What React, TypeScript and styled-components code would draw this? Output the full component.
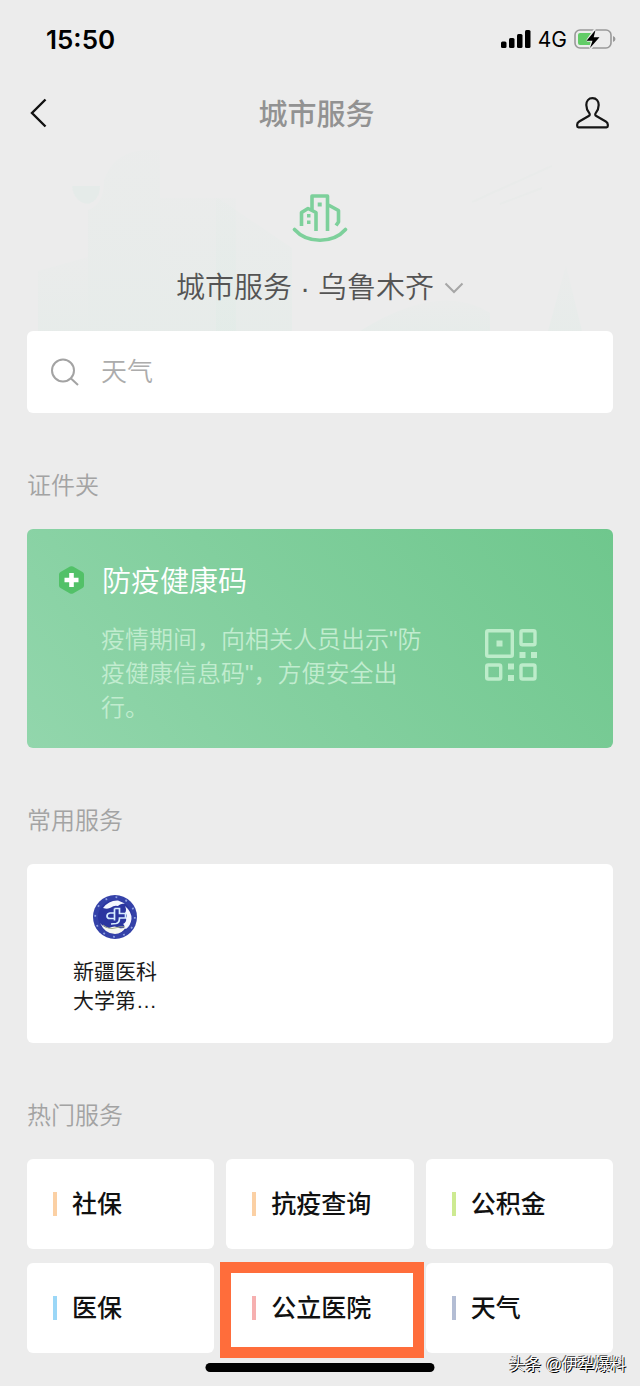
import React from "react";
import styled, { createGlobalStyle } from "styled-components";

const GlobalStyle = createGlobalStyle`
  *, *::before, *::after { box-sizing: border-box; }
  body {
    margin: 0;
    background: #ececec;
    color: #1a1a1a;
    font-family: "Liberation Sans", "Noto Sans CJK SC", sans-serif;
  }
  h1, h2, h3, p, ul { margin: 0; padding: 0; font-weight: inherit; }
  button, input { font: inherit; color: inherit; border: 0; background: none; padding: 0; }
  button { cursor: pointer; }
  svg { display: block; flex: none; }
`;

const Page = styled.div`
  position: relative;
  min-height: 100vh;
  padding-bottom: 33px;
  overflow: hidden;
`;

const StatusBar = styled.header`
  display: flex;
  align-items: center;
  justify-content: space-between;
  height: 78px;
  padding: 0 24px 0 46px;
  font-family: Inter, sans-serif;
  color: #000;
`;

const Clock = styled.time`
  font-size: 26px;
  font-weight: 600;
`;

const StatusIcons = styled.div`
  display: flex;
  align-items: center;
  gap: 7px;
  font-size: 21px;
`;

const NavBar = styled.nav`
  display: flex;
  align-items: center;
  justify-content: space-between;
  height: 70px;
  padding: 0 31px 0 30px;
`;

const IconButton = styled.button<{ $align: string; $width: number }>`
  display: flex;
  justify-content: ${(p) => p.$align};
  width: ${(p) => p.$width}px;
`;

const NavTitle = styled.h1`
  padding-top: 4px;
  font-size: 29px;
  line-height: 40px;
  font-weight: 500;
  color: #929292;
`;

const Hero = styled.section`
  position: relative;
  display: flex;
  flex-direction: column;
  align-items: center;
  height: 183px;
  padding-top: 45px;
`;

const Skyline = styled.svg`
  position: absolute;
  left: 0;
  top: 0;
  width: 100%;
  height: 100%;
`;

const CityButton = styled.button`
  position: relative;
  display: flex;
  align-items: center;
  gap: 10px;
  margin-top: 25px;
  font-size: 29px;
  line-height: 40px;
  font-weight: 350;
  color: #545454;
`;

const Main = styled.main`
  padding: 0 27px;
`;

const SearchBox = styled.label`
  position: relative;
  display: flex;
  align-items: center;
  gap: 22px;
  height: 82px;
  padding: 0 24px;
  border-radius: 6px;
  background: #fff;
`;

const SearchInput = styled.input`
  flex: 1;
  min-width: 0;
  font-size: 26px;
  line-height: 36px;
  font-weight: 350;
  outline: none;
  &::placeholder { color: #acacac; opacity: 1; }
`;

const SectionTitle = styled.h2`
  padding: 57px 0 27px;
  font-size: 24px;
  line-height: 32px;
  font-weight: 350;
  color: #a3a3a3;
`;

const HealthCard = styled.button`
  display: flex;
  align-items: flex-start;
  width: 100%;
  height: 219px;
  padding: 0 76px 0 32px;
  border-radius: 6px;
  background: linear-gradient(50deg, #92d6ac, #82cf9e 45%, #6fc78d);
  text-align: left;
`;

const HealthBody = styled.div`
  flex: 1;
  padding-top: 29px;
`;

const HealthHead = styled.div`
  display: flex;
  align-items: center;
  gap: 18px;
`;

const HealthTitle = styled.h3`
  padding-top: 4px;
  font-size: 29px;
  line-height: 40px;
  font-weight: 350;
  color: #fff;
`;

const HealthText = styled.p`
  width: 326px;
  margin: 21px 0 0 42px;
  font-size: 24px;
  line-height: 34px;
  font-weight: 350;
  color: #c1eccf;
`;

const QrSlot = styled.span`
  padding-top: 100px;
`;

const ServiceCard = styled.div`
  display: flex;
  height: 179px;
  padding: 30px 0 0 28px;
  border-radius: 6px;
  background: #fff;
`;

const ServiceLink = styled.a`
  display: flex;
  flex-direction: column;
  align-items: center;
  gap: 17px;
  width: 120px;
  font-size: 21px;
  line-height: 29px;
  color: #1a1a1a;
  text-align: center;
  text-decoration: none;
`;

const TileGrid = styled.div`
  display: grid;
  grid-template-columns: repeat(3, 1fr);
  gap: 14px 12px;
`;

const Tile = styled.button<{ $accent: string }>`
  position: relative;
  display: flex;
  align-items: center;
  gap: 15px;
  height: 90px;
  padding: 0 26px;
  border-radius: 6px;
  background: #fff;
  font-size: 25px;
  line-height: 36px;
  font-weight: 500;
  color: #111;
  white-space: nowrap;
  &::before {
    content: "";
    width: 4px;
    height: 24px;
    background: ${(p) => p.$accent};
  }
`;

const Highlight = styled.span`
  position: absolute;
  inset: -1px -10px -5px -6px;
  z-index: 1;
  border: 11px solid #ff6d3b;
`;

const HomeIndicator = styled.div`
  position: absolute;
  left: 50%;
  bottom: 14px;
  width: 229px;
  height: 9px;
  border-radius: 5px;
  background: #000;
  transform: translateX(-50%);
`;

const Watermark = styled.div`
  position: absolute;
  right: 14px;
  bottom: 9px;
  font-size: 16px;
  line-height: 24px;
  color: #fff;
  text-shadow: 1px 1px 0 #000, -1px -1px 0 #555;
`;

const tiles = [
  { name: "社保", accent: "#fbd0a4" },
  { name: "抗疫查询", accent: "#fbd0a4" },
  { name: "公积金", accent: "#cdea91" },
  { name: "医保", accent: "#9bd7f7" },
  { name: "公立医院", accent: "#f6b0b0", marked: true },
  { name: "天气", accent: "#b3bdd4" },
];

const SignalIcon = () => (
  <svg width="30" height="18" viewBox="0 0 30 18" fill="#000">
    <rect x="0" y="11.500" width="5.500" height="6.500" rx="1.500" />
    <rect x="8" y="8" width="5.500" height="10" rx="1.500" />
    <rect x="16" y="4" width="5.500" height="14" rx="1.500" />
    <rect x="24" y="0" width="5.500" height="18" rx="1.500" />
  </svg>
);

const BatteryIcon = () => (
  <svg width="42" height="22" viewBox="0 0 42 22">
    <rect x="1" y="2" width="36" height="18" rx="5" fill="none" stroke="#999" strokeWidth="1.600" />
    <path d="M39 8v6q2.500-.8 2.500-3T39 8z" fill="#999" />
    <path d="M6 5h14v12H6q-2 0-2-2V7q0-2 2-2z" fill="#62cc67" />
    <path d="M20.500 2.500 14 12.200h4.500L16.800 19.500l7.700-9.700h-5L20.500 2.500z" fill="#000" stroke="#ececec" strokeWidth="3" strokeLinejoin="round" />
    <path d="M21.500 2 12.500 12.700h6L16 20l9.500-10.700h-5.800L21.500 2z" fill="#000" />
  </svg>
);

const BackIcon = () => (
  <svg width="18" height="30" viewBox="0 0 18 30" fill="none" stroke="#111" strokeWidth="2.400">
    <path d="M15.500 1.500 2 15l13.500 13.500" />
  </svg>
);

const PersonIcon = () => (
  <svg width="33" height="32" viewBox="0 0 33 32" fill="none" stroke="#161616" strokeWidth="2.200" strokeLinejoin="round">
    <path d="M16.500 1.200c-4 0-6.200 2.900-6.200 6.800 0 3.500 1.300 6 3 8.100.8 1 .6 2.300-.6 2.900L3.200 24.500q-2 1.100-2 3.100v1.400q0 1.300 1.300 1.300h28q1.300 0 1.300-1.300v-1.400q0-2-2-3.100L20.300 19c-1.200-.6-1.400-1.900-.6-2.900 1.700-2.100 3-4.600 3-8.100 0-3.900-2.200-6.800-6.200-6.800z" />
  </svg>
);

const LogoSvg = styled.svg`
  position: relative;
`;

const CityLogo = () => (
  <LogoSvg width="56" height="50" viewBox="0 0 56 50" fill="none" stroke="#7dd09b" strokeWidth="3.600">
    <path d="M9.500 33V19.500l6.500-4 8 4V38M20 17V3h15.500v35M35.500 11.500 46.500 17.500V29l-2.500 3.500" strokeLinejoin="round" />
    <path d="M25.700 9.500h4v4h-4zM15 21h3.500v3.500H15zM15 27.500h3.500V31H15z" fill="#7dd09b" stroke="none" />
    <path d="M2.500 36.500q9.500 10.700 25.500 10.700t25.500-10.700" strokeLinecap="round" />
  </LogoSvg>
);

const ChevronIcon = () => (
  <svg width="20" height="12" viewBox="0 0 20 12" fill="none" stroke="#a6a6a6" strokeWidth="2">
    <path d="m1.500 1.500 8.500 8.500 8.500-8.500" />
  </svg>
);

const SearchIcon = () => (
  <svg width="28" height="28" viewBox="0 0 28 28" fill="none" stroke="#a3a3a3" strokeWidth="2">
    <circle cx="12" cy="12.500" r="11" />
    <path d="m20 20.500 7 6.500" />
  </svg>
);

const HealthIcon = () => (
  <svg width="25" height="28" viewBox="0 0 25 28">
    <path d="M11 .6q1.500-.9 3 0l9.500 5.400q1.500.9 1.500 2.600v10.800q0 1.700-1.500 2.600L14 27.400q-1.500.9-3 0L1.500 22Q0 21.100 0 19.400V8.600Q0 6.900 1.500 6z" fill="#52c168" />
    <path d="M12.500 7v14M5.500 14h14" stroke="#fff" strokeWidth="4.600" />
  </svg>
);

const QrIcon = () => (
  <svg width="52" height="52" viewBox="0 0 52 52" fill="none" stroke="#bdecca" strokeWidth="3.400">
    <rect x="1.700" y="1.700" width="25.600" height="25.600" rx="1.500" />
    <rect x="36" y="1.700" width="14" height="14" rx="1.500" />
    <rect x="1.700" y="36" width="14" height="14" rx="1.500" />
    <rect x="36" y="36" width="14" height="14" rx="1.500" />
    <path d="M11.500 11.500h6v6h-6zM34.500 23h6v6h-6zM46 23h6v6h-6zM23 34.500h6v6h-6zM23 46h6v6h-6z" fill="#bdecca" stroke="none" />
  </svg>
);

const HospitalLogo = () => (
  <svg width="46" height="46" viewBox="0 0 46 46">
    <circle cx="23" cy="23" r="22" fill="#3441a8" />
    <circle cx="23" cy="23" r="19.800" fill="none" stroke="#8fa0e0" strokeWidth="1.800" strokeDasharray="1.800 8.560" />
    <circle cx="23" cy="23" r="17" fill="#2b35a0" />
    <path d="M11 14q6-8 15-7.500l7 3q-5 0-7 2.500-4-1-7 1.500-3 2-8 .5z" fill="#f4f6ff" />
    <path d="M33 12q7 6 6.500 13-1 7-5.500 10l-2-1q1-3-1-4 4-2 3-6 2-3-1-5 2-3 0-7z" fill="#f4f6ff" />
    <path d="M8 29q4 5 9 5 6-3 10 0 4 1 7-1-4 7-11 7-10 0-15-11z" fill="#f7f8f2" />
    <path d="M11 31q6 5 12 3t10-1" fill="none" stroke="#a9b08e" strokeWidth="1" />
    <path d="M22.500 14.500h5v5h6v4.500h-6q0 5-3.500 5.500l-5 .5M22.500 14.500v12M22 19h-4q-3 .5-3 3t3 2.500h4" fill="none" stroke="#d6ecff" strokeWidth="1.700" />
  </svg>
);

export default function App() {
  return (
    <>
      <GlobalStyle />
      <Page>
        <StatusBar>
          <Clock>15:50</Clock>
          <StatusIcons>
            <SignalIcon />
            <span>4G</span>
            <BatteryIcon />
          </StatusIcons>
        </StatusBar>
        <NavBar>
          <IconButton $align="flex-start" $width={34} aria-label="返回"><BackIcon /></IconButton>
          <NavTitle>城市服务</NavTitle>
          <IconButton $align="flex-end" $width={40} aria-label="我的"><PersonIcon /></IconButton>
        </NavBar>
        <Hero>
          <Skyline viewBox="0 0 640 183" preserveAspectRatio="none" aria-hidden="true">
            <defs>
              <linearGradient id="haze" x1="0" y1="0" x2="0" y2="1">
                <stop offset="0" stopColor="#dcebe5" stopOpacity="0.1" />
                <stop offset="1" stopColor="#dcebe5" stopOpacity="0.32" />
              </linearGradient>
            </defs>
            <g fill="url(#haze)">
              <path d="M88 183V62q16-5 16-30 10-28 40-30h16v181z" />
              <path d="M160 183V50h58l74 50v83z" />
              <path d="M38 183v-60l50-14v74z" />
              <path d="M216 183V50h20v133z" />
              <path d="M360 183q80-50 130-18v18z" />
              <path d="M548 183l18-66 16 66z" />
            </g>
            <path d="M72 38h28q0 14-12 18-14-2-16-18z" fill="#dcebe5" opacity="0.4" />
            <path d="M472 54l80-36M500 56l42-16" stroke="#e9ebea" strokeWidth="2" />
          </Skyline>
          <CityLogo />
          <CityButton>
            城市服务 · 乌鲁木齐
            <ChevronIcon />
          </CityButton>
        </Hero>
        <Main>
          <SearchBox>
            <SearchIcon />
            <SearchInput type="text" placeholder="天气" aria-label="搜索" />
          </SearchBox>

          <SectionTitle>证件夹</SectionTitle>
          <HealthCard>
            <HealthBody>
              <HealthHead>
                <HealthIcon />
                <HealthTitle>防疫健康码</HealthTitle>
              </HealthHead>
              <HealthText>疫情期间，向相关人员出示"防疫健康信息码"，方便安全出行。</HealthText>
            </HealthBody>
            <QrSlot><QrIcon /></QrSlot>
          </HealthCard>

          <SectionTitle>常用服务</SectionTitle>
          <ServiceCard>
            <ServiceLink href="#hospital">
              <HospitalLogo />
              <span>新疆医科<br />大学第…</span>
            </ServiceLink>
          </ServiceCard>

          <SectionTitle>热门服务</SectionTitle>
          <TileGrid>
            {tiles.map((t) => (
              <Tile key={t.name} $accent={t.accent}>
                {t.name}
                {t.marked && <Highlight />}
              </Tile>
            ))}
          </TileGrid>
        </Main>
        <HomeIndicator />
        <Watermark>头条 @伊犁爆料</Watermark>
      </Page>
    </>
  );
}
